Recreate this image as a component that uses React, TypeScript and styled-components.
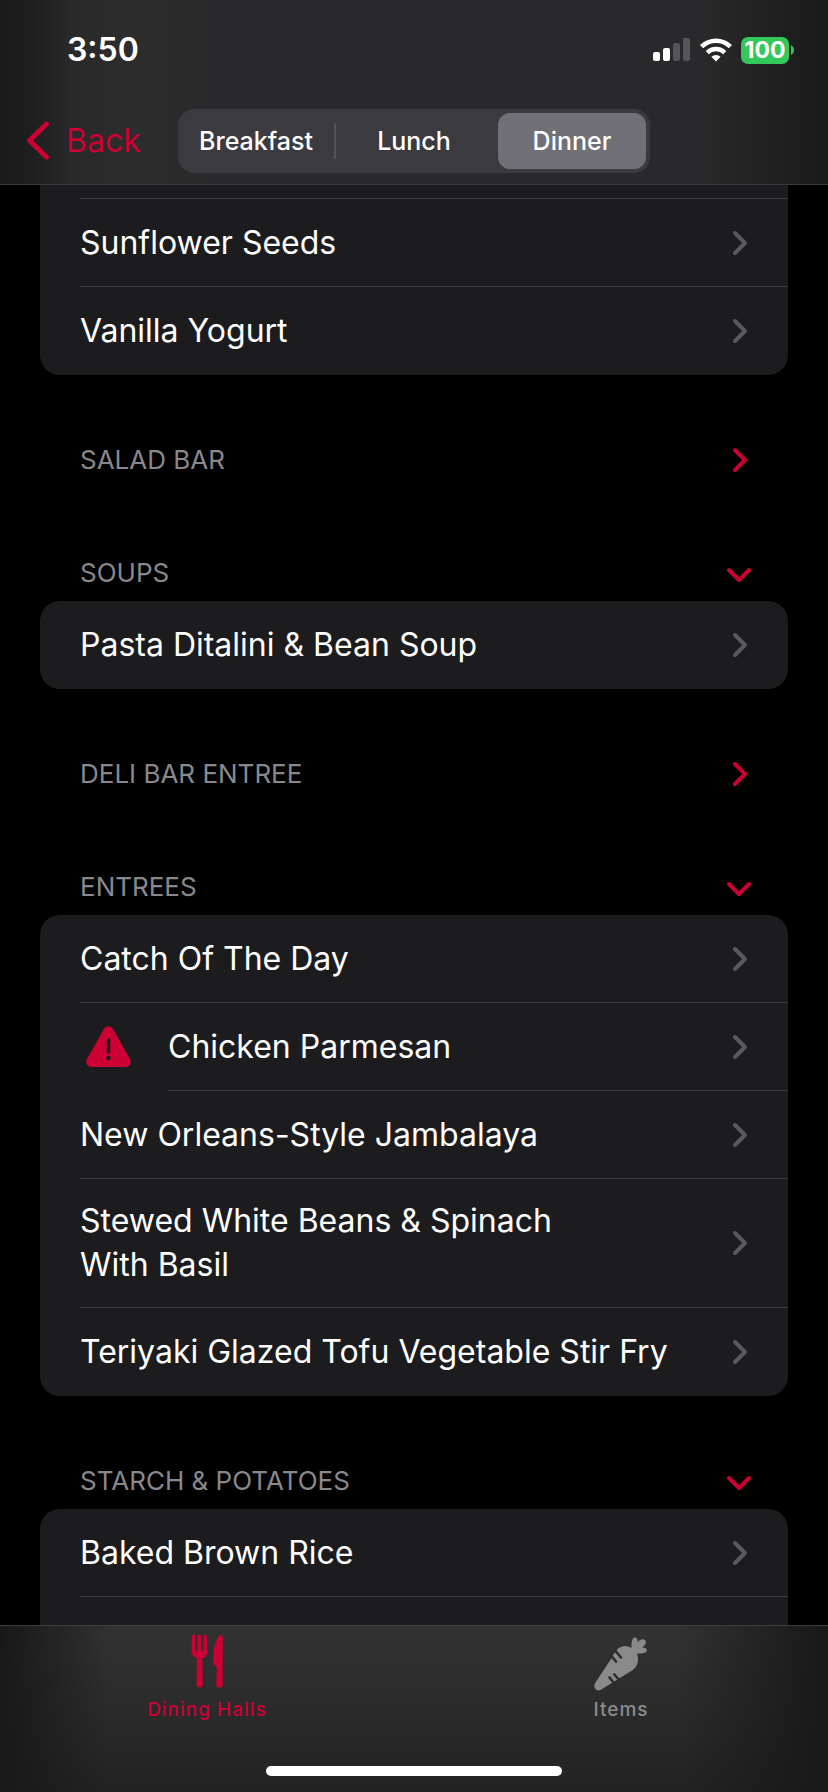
import React, { useState } from "react";
import styled, { createGlobalStyle } from "styled-components";

const color = {
  accent: "#cc0033",
  card: "#1c1c1e",
  line: "#3b3b3e",
  muted: "#88888d",
  disclosure: "#5a5a5e",
};

const GlobalStyle = createGlobalStyle`
  * { box-sizing: border-box; }
  body {
    margin: 0;
    background: #000;
    color: #fff;
    font-family: Inter, "Liberation Sans", sans-serif;
    -webkit-font-smoothing: antialiased;
  }
  button {
    margin: 0;
    padding: 0;
    border: 0;
    background: none;
    color: inherit;
    font: inherit;
    cursor: pointer;
  }
  a { color: inherit; text-decoration: none; }
  h2, ul { margin: 0; padding: 0; font: inherit; }
  ul { list-style: none; }
  svg { display: block; flex: none; overflow: visible; }
`;

const Screen = styled.div`
  display: flex;
  flex-direction: column;
  height: 100vh;
`;

const Header = styled.header`
  flex: none;
  border-bottom: 1px solid ${color.line};
  background: linear-gradient(
    to right,
    #1a1a1b 0,
    #1f1f20 32px,
    #29292a 72px,
    #2d2d2e 130px,
    #29292b 220px,
    #29292b calc(100% - 130px),
    #1a1a1a 100%
  );
`;

const StatusBar = styled.div`
  display: flex;
  align-items: center;
  justify-content: space-between;
  height: 100px;
  padding: 0 34px 0 67px;
`;

const Clock = styled.time`
  font-size: 32px;
  font-weight: 600;
  line-height: 40px;
`;

const StatusIcons = styled.div`
  display: flex;
  align-items: center;
  gap: 9px;
`;

const Battery = styled.div`
  display: flex;
  align-items: center;
  gap: 2px;
`;

const BatteryBody = styled.span`
  width: 48px;
  border-radius: 7px;
  background: #34c759;
  font-size: 23px;
  font-weight: 700;
  line-height: 27px;
  text-align: center;
`;

const NavBar = styled.nav`
  display: grid;
  grid-template-columns: 178px 1fr 178px;
  align-items: center;
  height: 84px;
  padding-bottom: 2px;
`;

const BackButton = styled.button`
  display: flex;
  align-items: center;
  gap: 16px;
  padding-left: 26px;
  color: ${color.accent};
  font-size: 32px;
  line-height: 44px;
`;

const Segments = styled.div`
  display: grid;
  grid-template-columns: 1fr 2px 1fr 2px 1fr;
  align-items: center;
  gap: 4px;
  padding: 4px;
  border-radius: 16px;
  background: #3b3a3f;
`;

const Segment = styled.button<{ $on: boolean }>`
  height: 56px;
  border-radius: 12px;
  background: ${(p) => (p.$on ? "#707076" : "transparent")};
  font-size: 25px;
  font-weight: 500;
`;

const SegmentRule = styled.span<{ $hidden: boolean }>`
  height: 36px;
  border-radius: 1px;
  background: ${(p) => (p.$hidden ? "transparent" : "#545359")};
`;

const Menu = styled.main`
  flex: 1;
  min-height: 0;
  overflow: hidden;
  padding: 0 40px;
`;

const SectionHeader = styled.h2`
  display: flex;
  padding: 65px 36px 8px 40px;
  color: ${color.muted};
  font-size: 26px;
  line-height: 40px;
`;

const SectionToggle = styled.button`
  display: flex;
  flex: 1;
  align-items: center;
  justify-content: space-between;
  text-transform: uppercase;
`;

const Card = styled.ul<{ $cut?: boolean }>`
  overflow: hidden;
  border-radius: ${(p) => (p.$cut ? "0 0 20px 20px" : "20px")};
  background: ${color.card};
`;

const Item = styled.li<{ $peek?: boolean }>`
  display: flex;
  height: ${(p) => (p.$peek ? "14px" : "auto")};
  padding-left: 40px;
`;

const WarningSlot = styled.span`
  display: flex;
  align-items: center;
  width: 88px;
  padding-left: 5px;
`;

const ItemLink = styled.a<{ $last?: boolean; $peek?: boolean }>`
  display: flex;
  flex: 1;
  align-items: center;
  justify-content: space-between;
  min-height: ${(p) => (p.$peek ? "0" : "88px")};
  padding: ${(p) => (p.$peek ? "0" : "20px 36px 20px 0")};
  border-bottom: ${(p) => (p.$last ? "0" : `1px solid ${color.line}`)};
  font-size: 32px;
  line-height: 44px;
`;

const ItemName = styled.span`
  white-space: pre-line;
`;

const TabBar = styled.nav`
  flex: none;
  border-top: 1px solid #3e3e40;
  background:
    linear-gradient(to right, #181818 0, #18181800 110px, #18181800 calc(100% - 150px), #181818 100%),
    linear-gradient(#323232, #2b2b2c 50%, #222223);
`;

const Tabs = styled.div`
  display: grid;
  grid-template-columns: 1fr 1fr;
`;

const Tab = styled.a<{ $on?: boolean }>`
  display: flex;
  flex-direction: column;
  align-items: center;
  gap: 10px;
  padding-top: 8px;
  color: ${(p) => (p.$on ? color.accent : "#8a8a8b")};
  font-size: 19px;
  font-weight: 500;
  line-height: 24px;
  letter-spacing: 1px;
`;

const HomeIndicator = styled.div`
  width: 296px;
  height: 10px;
  margin: 44px auto 16px;
  border-radius: 5px;
  background: #fff;
`;

const Signal = () => (
  <svg width="38" height="24" viewBox="0 0 38 24" role="img" aria-label="Signal">
    <rect x="0" y="14" width="7" height="9" rx="2" fill="#fff" />
    <rect x="10" y="10" width="7" height="13" rx="2" fill="#fff" />
    <rect x="20" y="5" width="7" height="18" rx="2" fill="#565658" />
    <rect x="30" y="0" width="7" height="23" rx="2" fill="#565658" />
  </svg>
);

const Wifi = () => (
  <svg width="32" height="24" viewBox="0 0 32 24" role="img" aria-label="Wi-Fi">
    <g fill="none" stroke="#fff" strokeWidth="4.6">
      <path d="M1.6 8.6a20.6 20.6 0 0 1 28.8 0" />
      <path d="M7.2 14.6a12.6 12.6 0 0 1 17.6 0" />
    </g>
    <path d="M11.4 18.8a6.7 6.7 0 0 1 9.2 0L16 23.6z" fill="#fff" />
  </svg>
);

const BatteryTip = () => (
  <svg width="3" height="10" viewBox="0 0 3 10" aria-hidden="true">
    <path d="M0 0c2 1 3 3 3 5s-1 4-3 5z" fill="#34c759" />
  </svg>
);

const BackChevron = () => (
  <svg width="24" height="40" viewBox="0 0 24 40" aria-hidden="true">
    <path d="M20.5 3L3.500 19.500l17 16.500" fill="none" stroke="currentColor" strokeWidth="5" strokeLinecap="round" strokeLinejoin="round" />
  </svg>
);

const Chevron = ({ down, tone }: { down?: boolean; tone: string }) => (
  <svg width="26" height="28" viewBox="0 0 26 28" aria-hidden="true">
    <path
      d={down ? "M3 11l10 10 10-10" : "M9 4l10 10L9 24"}
      fill="none"
      stroke={tone}
      strokeWidth="4"
      strokeLinecap="round"
      strokeLinejoin="round"
    />
  </svg>
);

const Warning = () => (
  <svg width="47" height="42" viewBox="0 0 47 42" role="img" aria-label="Warning">
    <path d="M18.900 3a5.300 5.300 0 0 1 9.200 0L45 33c2 3.700-.4 8-4.500 8h-34C2.400 41 0 36.700 2 33z" fill={color.accent} />
    <path d="M23.500 14v12" stroke={color.card} strokeWidth="3.400" strokeLinecap="round" />
    <circle cx="23.500" cy="32" r="2.300" fill={color.card} />
  </svg>
);

const ForkKnife = () => (
  <svg width="34" height="54" viewBox="0 0 34 54" aria-hidden="true" fill="currentColor">
    <path d="M1.800 2.200a1.600 1.600 0 0 1 3.200 0l.3 14a1 1 0 0 0 2 0l.3-14a1.700 1.700 0 0 1 3.400 0l.3 14a1 1 0 0 0 2 0l.3-14a1.600 1.600 0 0 1 3.200 0l.6 15.500c.1 3-1.500 4.600-4 5.700-.8.400-1 .9-1 1.700l.3 25.400a3 3 0 0 1-6.200 0l.3-25.400c0-.8-.2-1.300-1-1.700-2.500-1.100-4.300-2.700-4.200-5.700z" />
    <path d="M30 1h.5c1.600 0 2.200.9 2.200 2.200v47.300a3 3 0 0 1-6.400 0l.4-16.300c0-1-.2-1.500-1-2.100-2-1.400-2.700-2.300-2.700-4.600C23 15.500 25 6 30 1z" />
  </svg>
);

const Carrot = () => (
  <svg width="54" height="54" viewBox="0 -3 54 54" aria-hidden="true">
    <path
      d="M18 20.500L1.200 46C-1.500 50.500 2.800 55.500 7.300 52.600L38 33.500c5.500-3.500 7.500-10 5-17.200 5 .7 9.800-.3 9.800-3.100 0-2-2.200-2.800-5-2.600C51.500 8 53 5 51 3.200c-2-1.900-5.300-.6-7.300 2.300C43.600 2.500 43 .6 40.900.6c-2.600 0-3.800 5-3.300 10.400C30.500 6.500 22.800 9.500 18 20.500z"
      fill="currentColor"
    />
    <g stroke="#2d2d2e" strokeWidth="2.600" strokeLinecap="round">
      <path d="M17 18.500l5 6M21.500 14l5.500 6.500M15.500 40.500l4.500 5.500M20.300 37.500l5 5.500" />
    </g>
  </svg>
);

type Dish = { name: string; warn?: boolean };
type Station = { title: string; dishes: Dish[]; open: boolean; more?: boolean };

const stations: Station[] = [
  { title: "Salad Bar", open: false, dishes: [] },
  { title: "Soups", open: true, dishes: [{ name: "Pasta Ditalini & Bean Soup" }] },
  { title: "Deli Bar Entree", open: false, dishes: [] },
  {
    title: "Entrees",
    open: true,
    dishes: [
      { name: "Catch Of The Day" },
      { name: "Chicken Parmesan", warn: true },
      { name: "New Orleans-Style Jambalaya" },
      { name: "Stewed White Beans & Spinach\nWith Basil" },
      { name: "Teriyaki Glazed Tofu Vegetable Stir Fry" },
    ],
  },
  { title: "Starch & Potatoes", open: true, more: true, dishes: [{ name: "Baked Brown Rice" }] },
];

const DishRow = ({ dish, last }: { dish: Dish; last: boolean }) => (
  <Item>
    {dish.warn && (
      <WarningSlot>
        <Warning />
      </WarningSlot>
    )}
    <ItemLink href="#" $last={last}>
      <ItemName>{dish.name}</ItemName>
      <Chevron tone={color.disclosure} />
    </ItemLink>
  </Item>
);

const StationSection = ({ station }: { station: Station }) => {
  const [open, setOpen] = useState(station.open);
  return (
    <section>
      <SectionHeader>
        <SectionToggle aria-expanded={open} onClick={() => setOpen(!open)}>
          {station.title}
          <Chevron down={open} tone={color.accent} />
        </SectionToggle>
      </SectionHeader>
      {open && station.dishes.length > 0 && (
        <Card>
          {station.dishes.map((dish, i) => (
            <DishRow key={dish.name} dish={dish} last={!station.more && i === station.dishes.length - 1} />
          ))}
          {station.more && (
            <Item aria-hidden="true">
              <ItemLink as="span" $last />
            </Item>
          )}
        </Card>
      )}
    </section>
  );
};

const meals = ["Breakfast", "Lunch", "Dinner"];

export default function App() {
  const [meal, setMeal] = useState(2);
  return (
    <Screen>
      <GlobalStyle />
      <Header>
        <StatusBar>
          <Clock>3:50</Clock>
          <StatusIcons>
            <Signal />
            <Wifi />
            <Battery>
              <BatteryBody>100</BatteryBody>
              <BatteryTip />
            </Battery>
          </StatusIcons>
        </StatusBar>
        <NavBar>
          <BackButton>
            <BackChevron />
            Back
          </BackButton>
          <Segments role="group" aria-label="Meal">
            {meals.map((name, i) => (
              <React.Fragment key={name}>
                {i > 0 && <SegmentRule $hidden={meal === i || meal === i - 1} />}
                <Segment $on={meal === i} aria-pressed={meal === i} onClick={() => setMeal(i)}>
                  {name}
                </Segment>
              </React.Fragment>
            ))}
          </Segments>
        </NavBar>
      </Header>
      <Menu>
        <Card $cut>
          <Item $peek aria-hidden="true">
            <ItemLink as="span" $peek />
          </Item>
          <DishRow dish={{ name: "Sunflower Seeds" }} last={false} />
          <DishRow dish={{ name: "Vanilla Yogurt" }} last />
        </Card>
        {stations.map((station) => (
          <StationSection key={station.title} station={station} />
        ))}
      </Menu>
      <TabBar>
        <Tabs>
          <Tab href="#" $on aria-current="page">
            <ForkKnife />
            Dining Halls
          </Tab>
          <Tab href="#">
            <Carrot />
            Items
          </Tab>
        </Tabs>
        <HomeIndicator />
      </TabBar>
    </Screen>
  );
}
